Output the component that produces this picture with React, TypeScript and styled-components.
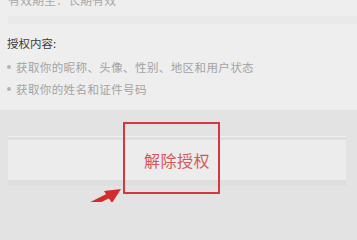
import { styled, createGlobalStyle } from 'styled-components'

const GlobalStyle = createGlobalStyle`
    html, body {
        margin: 0;
        padding: 0;
        background: #e3e3e3;
    }
    body {
        font-family: 'Noto Sans CJK SC', 'Noto Sans', sans-serif;
    }
`

const scopes = ['获取你的昵称、头像、性别、地区和用户状态', '获取你的姓名和证件号码']

function App() {
    return (
        <Page>
            <GlobalStyle />
            <InfoSection>
                <Expiry>有效期至：长期有效</Expiry>
                <Band />
                <Heading>授权内容:</Heading>
                <ScopeList>
                    {scopes.map((s) => (
                        <ScopeItem key={s}>
                            <Dot />
                            {s}
                        </ScopeItem>
                    ))}
                </ScopeList>
            </InfoSection>
            <ActionSection>
                <RevokeButton>解除授权</RevokeButton>
            </ActionSection>
            <Highlight />
            <Arrow viewBox="80 180 45 22">
                <line x1="84" y1="208" x2="110" y2="195" stroke="#d42b2e" strokeWidth="5" />
                <polygon points="121,189 104,191 112,203" fill="#d42b2e" />
            </Arrow>
        </Page>
    )
}

export default App

const Page = styled.div`
    position: relative;
    width: 357px;
    height: 202px;
    overflow: hidden;
    display: flex;
    flex-direction: column;
`

const InfoSection = styled.div`
    height: 110px;
    box-sizing: border-box;
    background: #eeeeee;
    padding: 0 0 0 8px;
    display: flex;
    flex-direction: column;
`

const Expiry = styled.div`
    margin-top: -8px;
    height: 16px;
    line-height: 16px;
    font-size: 12px;
    color: #a9a9a9;
`

const Band = styled.div`
    margin-top: 8px;
    height: 8px;
    background: #e9e9e9;
`

const Heading = styled.div`
    margin-top: 11px;
    margin-left: -1px;
    height: 16px;
    line-height: 16px;
    font-size: 11.5px;
    color: #3c3c3c;
`

const ScopeList = styled.ul`
    list-style: none;
    margin: 5px 0 0 0;
    padding: 0;
`

const ScopeItem = styled.li`
    display: flex;
    align-items: center;
    height: 22px;
    font-size: 11.5px;
    color: #a3a3a3;
    letter-spacing: 0.4px;
`

const Dot = styled.span`
    width: 4px;
    height: 4px;
    border-radius: 50%;
    background: #b4b4b4;
    margin: 0 5px 0 -1px;
`

const ActionSection = styled.div`
    flex: 1;
    background: #e3e3e3;
    padding: 27px 11px 0 8px;
`

const RevokeButton = styled.div`
    height: 40px;
    background: #ececec;
    border-top: 3px solid #dfdfdf;
    box-shadow: 0 -1px 0 #f1f1f1, 0 6px 0 #dedede;
    display: flex;
    align-items: center;
    justify-content: center;
    font-size: 16px;
    letter-spacing: 0.5px;
    color: #d4575b;
`

const Highlight = styled.div`
    position: absolute;
    left: 123px;
    top: 122px;
    width: 93px;
    height: 68px;
    border: 2px solid #d4373d;
`

const Arrow = styled.svg`
    position: absolute;
    left: 80px;
    top: 180px;
    width: 45px;
    height: 22px;
`
